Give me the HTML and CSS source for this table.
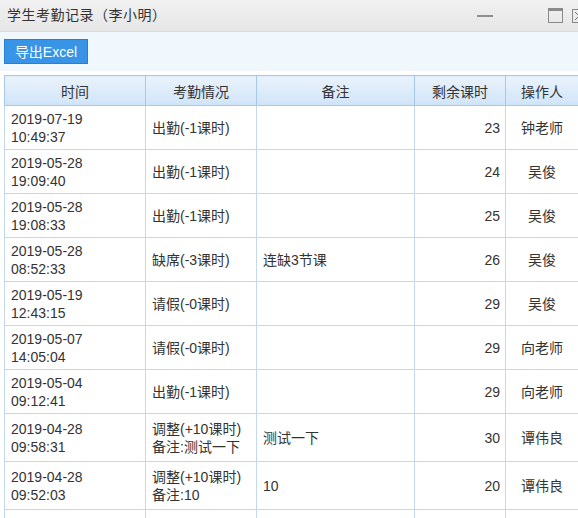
FILE: index.html
```html
<!DOCTYPE html>
<html lang="zh">
<head>
<meta charset="utf-8">
<link rel="stylesheet" href="styles.css">
</head>
<body>
<div class="win">
  <div class="titlebar">
    <span class="title">学生考勤记录（李小明）</span>
    <div class="ctrls">
      <span class="min"></span>
      <span class="max"></span>
      <span class="close"><svg width="14" height="14" viewBox="0 0 14 14"><rect x="0.5" y="0.5" width="13" height="13" fill="none" stroke="#8a8a8a"/><path d="M3 3 L11 11 M11 3 L3 11" stroke="#777" stroke-width="1"/></svg></span>
    </div>
  </div>
  <div class="toolbar">
    <button class="btn">导出Excel</button>
  </div>
  <div class="content">
    <table class="grid">
      <colgroup>
        <col class="c1"><col class="c2"><col class="c3"><col class="c4"><col class="c5">
      </colgroup>
      <thead>
        <tr><th>时间</th><th>考勤情况</th><th>备注</th><th>剩余课时</th><th>操作人</th></tr>
      </thead>
      <tbody>
        <tr><td>2019-07-19<br>10:49:37</td><td>出勤(-1课时)</td><td></td><td class="num">23</td><td class="ctr">钟老师</td></tr>
        <tr><td>2019-05-28<br>19:09:40</td><td>出勤(-1课时)</td><td></td><td class="num">24</td><td class="ctr">吴俊</td></tr>
        <tr><td>2019-05-28<br>19:08:33</td><td>出勤(-1课时)</td><td></td><td class="num">25</td><td class="ctr">吴俊</td></tr>
        <tr><td>2019-05-28<br>08:52:33</td><td>缺席(-3课时)</td><td>连缺3节课</td><td class="num">26</td><td class="ctr">吴俊</td></tr>
        <tr><td>2019-05-19<br>12:43:15</td><td>请假(-0课时)</td><td></td><td class="num">29</td><td class="ctr">吴俊</td></tr>
        <tr><td>2019-05-07<br>14:05:04</td><td>请假(-0课时)</td><td></td><td class="num">29</td><td class="ctr">向老师</td></tr>
        <tr><td>2019-05-04<br>09:12:41</td><td>出勤(-1课时)</td><td></td><td class="num">29</td><td class="ctr">向老师</td></tr>
        <tr class="tall"><td>2019-04-28<br>09:58:31</td><td>调整(+10课时)<br>备注:测试一下</td><td>测试一下</td><td class="num">30</td><td class="ctr">谭伟良</td></tr>
        <tr class="tall"><td>2019-04-28<br>09:52:03</td><td>调整(+10课时)<br>备注:10</td><td>10</td><td class="num">20</td><td class="ctr">谭伟良</td></tr>
        <tr><td></td><td></td><td></td><td class="num"></td><td class="ctr"></td></tr>
      </tbody>
    </table>
  </div>
</div>
</body>
</html>
```

FILE: styles.css
```css
html, body {
  margin: 0;
  padding: 0;
  background: #ffffff;
  overflow: hidden;
}
body {
  width: 578px;
  height: 518px;
  font-family: "Liberation Sans", Arial, "Noto Sans CJK SC", sans-serif;
  font-size: 14px;
  color: #333333;
}
.win {
  width: 578px;
  height: 518px;
  overflow: hidden;
}
.titlebar {
  height: 32px;
  box-sizing: border-box;
  border-bottom: 1px solid #dcdcdc;
  background: linear-gradient(#f1f1f1, #e6e6e6);
  display: flex;
  align-items: center;
  padding-left: 7px;
  padding-bottom: 3px;
}
.title {
  font-size: 14px;
  color: #333;
  letter-spacing: 0.5px;
  flex: 1;
}
.ctrls {
  display: flex;
  align-items: center;
  flex-shrink: 0;
  width: 110px;
  padding-top: 3px;
}
.min {
  flex-shrink: 0;
  width: 16px;
  height: 2px;
  background: #8f8f8f;
  margin-left: 9px;
  margin-right: 55px;
}
.max {
  flex-shrink: 0;
  width: 13px;
  height: 11px;
  border: 1px solid #8a8a8a;
  border-top-width: 3px;
  box-sizing: content-box;
  margin-right: 9px;
}
.close {
  display: block;
  flex-shrink: 0;
  width: 14px;
  height: 14px;
  line-height: 0;
}
.toolbar {
  background: #f0f7fd;
  height: 39px;
  box-sizing: border-box;
  padding: 7px 4px 0;
}
.btn {
  height: 25px;
  width: 84px;
  padding: 0;
  margin: 0;
  border: 1px solid #2b7fd0;
  background: #3794e6;
  color: #ffffff;
  font-family: "Liberation Sans", Arial, "Noto Sans CJK SC", sans-serif;
  font-size: 14px;
  line-height: 22px;
  cursor: pointer;
}
.content {
  padding: 4px 0 0 4px;
}
.grid {
  border-collapse: collapse;
  table-layout: fixed;
  width: 574px;
}
.c1 { width: 141px; }
.c2 { width: 111px; }
.c3 { width: 158px; }
.c4 { width: 91px; }
.c5 { width: 73px; }
.grid th {
  height: 29px;
  padding: 0;
  font-weight: normal;
  text-align: center;
  border: 1px solid #a9c7e8;
  background: linear-gradient(#eaf3fc, #d0e4f8);
  color: #333;
}
.grid td {
  height: 43px;
  padding: 0 5px 0 6px;
  border: 1px solid #c4d8ee;
  line-height: 18px;
  vertical-align: middle;
  color: #333;
  white-space: nowrap;
  overflow: hidden;
}
.grid tr.tall td {
  height: 47px;
}
.grid td.num {
  text-align: right;
}
.grid td.ctr {
  text-align: center;
  padding: 0;
}
```
